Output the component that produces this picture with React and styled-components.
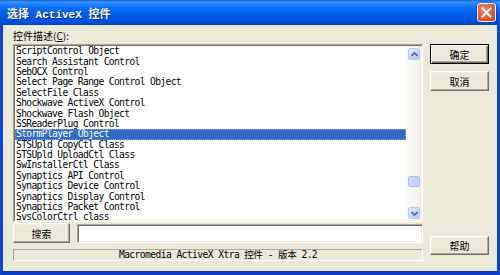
import React from 'react';
import styled, { createGlobalStyle } from 'styled-components';

const GlobalStyle = createGlobalStyle`
  html, body {
    margin: 0;
    padding: 0;
    background: #ece9d8;
  }
  body {
    font-family: 'DejaVu Sans Mono', 'Noto Sans CJK SC', monospace;
    font-size: 10px;
    color: #000;
  }
`;

const controls = [
  'ScriptControl Object',
  'Search Assistant Control',
  'SebOCX Control',
  'Select Page Range Control Object',
  'SelectFile Class',
  'Shockwave ActiveX Control',
  'Shockwave Flash Object',
  'SSReaderPlug Control',
  'StormPlayer Object',
  'STSUpld CopyCtl Class',
  'STSUpld UploadCtl Class',
  'SwInstallerCtl Class',
  'Synaptics API Control',
  'Synaptics Device Control',
  'Synaptics Display Control',
  'Synaptics Packet Control',
  'SvsColorCtrl class'
];

const SELECTED = 'StormPlayer Object';

export default function App() {
  return (
    <>
      <GlobalStyle />
      <Window>
        <TitleBar>
          <Title>选择 ActiveX 控件</Title>
          <CloseButton aria-label="关闭">
            <svg width="11" height="11" viewBox="0 0 11 11">
              <path
                d="M1.5 1.5 L9.5 9.5 M9.5 1.5 L1.5 9.5"
                stroke="#fff"
                strokeWidth="2"
                strokeLinecap="square"
              />
            </svg>
          </CloseButton>
        </TitleBar>
        <Body>
          <Label>
            控件描述(<u>C</u>):
          </Label>
          <ListBox>
            <Rows>
              {controls.map(name => (
                <Row key={name} selected={name === SELECTED}>
                  {name}
                </Row>
              ))}
            </Rows>
            <ScrollBar>
              <ArrowButton>
                <svg width="7" height="5" viewBox="0 0 7 5">
                  <path d="M0.5 4 L3.5 1 L6.5 4" stroke="#4d6185" strokeWidth="1.6" fill="none" />
                </svg>
              </ArrowButton>
              <Track>
                <Thumb offset={115} />
              </Track>
              <ArrowButton>
                <svg width="7" height="5" viewBox="0 0 7 5">
                  <path d="M0.5 1 L3.5 4 L6.5 1" stroke="#4d6185" strokeWidth="1.6" fill="none" />
                </svg>
              </ArrowButton>
            </ScrollBar>
          </ListBox>
          <SearchRow>
            <Button>搜索</Button>
            <SearchField />
          </SearchRow>
          <StatusPanel>Macromedia ActiveX Xtra 控件 - 版本 2.2</StatusPanel>
          <SideColumn>
            <Button primary>确定</Button>
            <Button>取消</Button>
            <HelpButton>帮助</HelpButton>
          </SideColumn>
        </Body>
      </Window>
    </>
  );
}

const Window = styled.div`
  width: 500px;
  height: 275px;
  display: flex;
  flex-direction: column;
  overflow: hidden;
`;

const TitleBar = styled.div`
  height: 25px;
  flex: none;
  display: flex;
  align-items: center;
  padding: 0 4px 0 7px;
  background: linear-gradient(
    #0a5ee0 0,
    #3d95ff 2px,
    #2485ff 4px,
    #0a6ff8 8px,
    #0060ec 13px,
    #0056e4 18px,
    #0052de 22px,
    #0049d0 24px,
    #003fb8 25px
  );
`;

const Title = styled.div`
  font-family: 'Liberation Mono', 'Noto Sans CJK SC', monospace;
  font-weight: bold;
  font-size: 11px;
  color: #fff;
  text-shadow: 1px 1px 0 #0a2a8a;
  white-space: pre;
`;

const CloseButton = styled.div`
  margin-left: auto;
  width: 17px;
  height: 17px;
  border: 1px solid #fff;
  border-radius: 3px;
  display: flex;
  align-items: center;
  justify-content: center;
  background: radial-gradient(circle at 35% 30%, #ec8a6c 0, #e0603f 45%, #c8421f 100%);
  box-shadow: 0 0 0 1px rgba(0, 40, 140, 0.35);
`;

const Body = styled.div`
  flex: 1;
  display: grid;
  grid-template-columns: 410px 59px;
  grid-template-rows: 15px 178px 20px 12px;
  column-gap: 7px;
  padding: 4px 8px 10px 10px;
  background: #ece9d8;
  border: 3px solid #0b47dc;
  border-top: none;
  box-shadow: inset 0 -1px 0 #0831b8;
  border-bottom-color: #0a3cc8;
`;

const Label = styled.div`
  grid-column: 1;
  grid-row: 1;
  font-family: 'Noto Sans CJK SC', 'Liberation Sans', sans-serif;
  font-size: 10px;
  line-height: 15px;
  padding-left: 0;
  margin-top: -1px;

  u {
    text-underline-offset: 1px;
  }
`;

const ListBox = styled.div`
  grid-column: 1;
  grid-row: 2;
  display: flex;
  background: #fff;
  border: 1px solid;
  border-color: #aca899 #fff #fff #aca899;
  box-shadow: inset 1px 1px 0 #716f64, inset -1px -1px 0 #f1efe2;
  padding: 1px;
  overflow: hidden;
`;

const Rows = styled.div`
  flex: 1;
  overflow: hidden;
  padding-top: 0.3px;
`;

const Row = styled.div`
  height: 10.375px;
  line-height: 10.375px;
  padding-left: 1px;
  font-size: 9.6px;
  letter-spacing: -0.62px;
  white-space: pre;
  color: ${p => (p.selected ? '#fff' : '#000')};
  background: ${p => (p.selected ? '#316ac5' : 'transparent')};
  outline: ${p => (p.selected ? '1px dotted #8aa6d8' : 'none')};
  outline-offset: -1px;
`;

const ScrollBar = styled.div`
  width: 15px;
  flex: none;
  display: flex;
  flex-direction: column;
  background: linear-gradient(90deg, #fbfbf8 0, #f6f5ef 60%, #eeede5 100%);
`;

const ArrowButton = styled.div`
  width: 12px;
  height: 12px;
  margin: 2px 1px 1px 2px;
  flex: none;
  border: 1px solid #b7c9f5;
  border-radius: 2px;
  background: linear-gradient(135deg, #e3ebff 0, #c6d6fc 55%, #b3c8f8 100%);
  display: flex;
  align-items: center;
  justify-content: center;
  box-sizing: border-box;
`;

const Track = styled.div`
  flex: 1;
  position: relative;
`;

const Thumb = styled.div`
  position: absolute;
  left: 2px;
  top: ${p => p.offset}px;
  width: 12px;
  height: 11px;
  box-sizing: border-box;
  border: 1px solid #a9bff3;
  border-radius: 2px;
  background: linear-gradient(90deg, #c9d8fc 0, #bccffb 100%);
`;

const SearchRow = styled.div`
  grid-column: 1;
  grid-row: 3;
  margin-top: 1px;
  display: flex;
  gap: 7px;
`;

const Button = styled.div`
  width: ${p => (p.primary ? '59px' : '59px')};
  height: 20px;
  flex: none;
  box-sizing: border-box;
  display: flex;
  align-items: center;
  justify-content: center;
  font-family: 'Noto Sans CJK SC', sans-serif;
  font-size: 10px;
  background: #ece9d8;
  border: 1px solid;
  border-color: ${p => (p.primary ? '#000' : '#fff #716f64 #716f64 #fff')};
  box-shadow: ${p =>
    p.primary
      ? 'inset 1px 1px 0 #fff, inset -1px -1px 0 #716f64, inset -2px -2px 0 #aca899'
      : 'inset -1px -1px 0 #aca899, inset 1px 1px 0 #f1efe2'};

  ${SearchRow} & {
    width: 57px;
  }
`;

const HelpButton = styled(Button)`
  margin-top: auto;
  margin-bottom: -1px;
  height: 19px;
`;

const SearchField = styled.div`
  flex: 1;
  margin-top: 1px;
  height: 19px;
  box-sizing: border-box;
  background: #fff;
  border: 1px solid;
  border-color: #aca899 #fff #fff #aca899;
  box-shadow: inset 1px 1px 0 #716f64, inset -1px -1px 0 #f1efe2;
`;

const StatusPanel = styled.div`
  grid-column: 1;
  grid-row: 4;
  margin-top: 7px;
  height: 12px;
  box-sizing: border-box;
  border: 1px solid;
  border-color: #aca899 #fff #fff #aca899;
  display: flex;
  align-items: center;
  justify-content: center;
  font-size: 9.6px;
  letter-spacing: -0.55px;
  white-space: pre;
  line-height: 10px;
`;

const SideColumn = styled.div`
  grid-column: 2;
  grid-row: 2 / 5;
  display: flex;
  flex-direction: column;
  gap: 7px;
  padding-top: 0;
`;
